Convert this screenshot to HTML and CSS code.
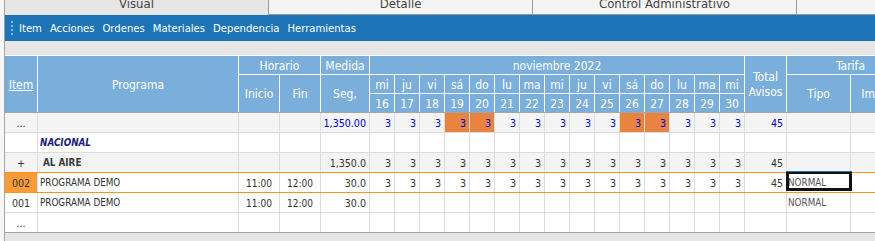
FILE: index.html
```html
<!DOCTYPE html>
<html lang="es">
<head>
<meta charset="utf-8">
<title>Programación</title>
<link rel="stylesheet" href="styles.css">
</head>
<body>
<div class="app">
  <div class="tabs">
    <div class="tab active">Visual</div>
    <div class="tab">Detalle</div>
    <div class="tab">Control Administrativo</div>
    <div class="tab rest"></div>
  </div>
  <div class="toolbar">
    <span class="grip"></span>
    <span class="menu">Item</span>
    <span class="menu">Acciones</span>
    <span class="menu">Ordenes</span>
    <span class="menu">Materiales</span>
    <span class="menu">Dependencia</span>
    <span class="menu">Herramientas</span>
  </div>
  <div class="spacer"></div>
  <div class="head">
    <div class="h c-item"><u>Item</u></div>
    <div class="h c-prog">Programa</div>
    <div class="h c-horario">Horario</div>
    <div class="h c-ini">Inicio</div>
    <div class="h c-fin">Fin</div>
    <div class="h c-medida">Medida</div>
    <div class="h c-seg">Seg,</div>
    <div class="h c-mes">noviembre 2022</div>
    <div class="h c-total">Total<br>Avisos</div>
    <div class="h c-tarifa">Tarifa</div>
    <div class="h c-tipo">Tipo</div>
    <div class="h c-imp">Importe</div>
    <div class="h dn">mi</div><div class="h dn">ju</div><div class="h dn">vi</div><div class="h dn">sá</div><div class="h dn">do</div><div class="h dn">lu</div><div class="h dn">ma</div><div class="h dn">mi</div><div class="h dn">ju</div><div class="h dn">vi</div><div class="h dn">sá</div><div class="h dn">do</div><div class="h dn">lu</div><div class="h dn">ma</div><div class="h dn">mi</div>
    <div class="h dd">16</div><div class="h dd">17</div><div class="h dd">18</div><div class="h dd">19</div><div class="h dd">20</div><div class="h dd">21</div><div class="h dd">22</div><div class="h dd">23</div><div class="h dd">24</div><div class="h dd">25</div><div class="h dd">26</div><div class="h dd">27</div><div class="h dd">28</div><div class="h dd">29</div><div class="h dd">30</div>
  </div>
  <div class="rows">
    <div class="row alt totals">
      <div class="cell center">...</div>
      <div class="cell"></div>
      <div class="cell"></div>
      <div class="cell"></div>
      <div class="cell num">1,350.00</div>
      <div class="cell num">3</div><div class="cell num">3</div><div class="cell num">3</div><div class="cell num we">3</div><div class="cell num we">3</div><div class="cell num">3</div><div class="cell num">3</div><div class="cell num">3</div><div class="cell num">3</div><div class="cell num">3</div><div class="cell num we">3</div><div class="cell num we">3</div><div class="cell num">3</div><div class="cell num">3</div><div class="cell num">3</div>
      <div class="cell num">45</div>
      <div class="cell"></div>
      <div class="cell"></div>
    </div>
    <div class="row">
      <div class="cell"></div>
      <div class="cell txt group">NACIONAL</div>
      <div class="cell"></div><div class="cell"></div><div class="cell"></div>
      <div class="cell"></div><div class="cell"></div><div class="cell"></div><div class="cell"></div><div class="cell"></div><div class="cell"></div><div class="cell"></div><div class="cell"></div><div class="cell"></div><div class="cell"></div><div class="cell"></div><div class="cell"></div><div class="cell"></div><div class="cell"></div><div class="cell"></div>
      <div class="cell"></div><div class="cell"></div><div class="cell"></div>
    </div>
    <div class="row alt">
      <div class="cell center">+</div>
      <div class="cell txt sub">AL AIRE</div>
      <div class="cell"></div><div class="cell"></div>
      <div class="cell num">1,350.0</div>
      <div class="cell num">3</div><div class="cell num">3</div><div class="cell num">3</div><div class="cell num">3</div><div class="cell num">3</div><div class="cell num">3</div><div class="cell num">3</div><div class="cell num">3</div><div class="cell num">3</div><div class="cell num">3</div><div class="cell num">3</div><div class="cell num">3</div><div class="cell num">3</div><div class="cell num">3</div><div class="cell num">3</div>
      <div class="cell num">45</div>
      <div class="cell"></div><div class="cell"></div>
    </div>
    <div class="row selected">
      <div class="cell center sel-item">002</div>
      <div class="cell txt">PROGRAMA DEMO</div>
      <div class="cell center time">11:00</div>
      <div class="cell center time">12:00</div>
      <div class="cell num">30.0</div>
      <div class="cell num">3</div><div class="cell num">3</div><div class="cell num">3</div><div class="cell num">3</div><div class="cell num">3</div><div class="cell num">3</div><div class="cell num">3</div><div class="cell num">3</div><div class="cell num">3</div><div class="cell num">3</div><div class="cell num">3</div><div class="cell num">3</div><div class="cell num">3</div><div class="cell num">3</div><div class="cell num">3</div>
      <div class="cell num">45</div>
      <div class="cell txt editing">NORMAL<span class="editor"></span></div>
      <div class="cell"></div>
    </div>
    <div class="row">
      <div class="cell center">001</div>
      <div class="cell txt">PROGRAMA DEMO</div>
      <div class="cell center time">11:00</div>
      <div class="cell center time">12:00</div>
      <div class="cell num">30.0</div>
      <div class="cell"></div><div class="cell"></div><div class="cell"></div><div class="cell"></div><div class="cell"></div><div class="cell"></div><div class="cell"></div><div class="cell"></div><div class="cell"></div><div class="cell"></div><div class="cell"></div><div class="cell"></div><div class="cell"></div><div class="cell"></div><div class="cell"></div>
      <div class="cell"></div>
      <div class="cell txt tipo">NORMAL</div>
      <div class="cell"></div>
    </div>
    <div class="row last">
      <div class="cell center">...</div>
      <div class="cell"></div>
      <div class="cell"></div><div class="cell"></div><div class="cell"></div>
      <div class="cell"></div><div class="cell"></div><div class="cell"></div><div class="cell"></div><div class="cell"></div><div class="cell"></div><div class="cell"></div><div class="cell"></div><div class="cell"></div><div class="cell"></div><div class="cell"></div><div class="cell"></div><div class="cell"></div><div class="cell"></div><div class="cell"></div>
      <div class="cell"></div><div class="cell"></div><div class="cell"></div>
    </div>
  </div>
  <div class="footer"></div>
</div>
</body>
</html>
```

FILE: styles.css
```css
* { box-sizing: border-box; }
html, body { margin: 0; padding: 0; }
body {
  background: #f7f7f7;
  font-family: "DejaVu Sans Condensed", "DejaVu Sans", sans-serif;
  width: 875px;
  height: 241px;
  overflow: hidden;
}
.app {
  margin-left: 4px;
  border-left: 1px solid #a3a3a3;
  width: 871px;
  height: 241px;
  overflow: hidden;
  display: flex;
  flex-direction: column;
}
/* tabs */
.tabs {
  display: flex;
  margin-top: -6px;
  height: 21px;
  flex: none;
}
.tab {
  width: 264px;
  flex: none;
  background: #f4f4f4;
  border-left: 1px solid #9a9a9a;
  border-bottom: 1px solid #9a9a9a;
  font-size: 13px;
  line-height: 20px;
  color: #444;
  text-align: center;
}
.tab.active {
  width: 263px;
  background: #e6e6e6;
  border-left: none;
  border-bottom: none;
}
.tab.rest { flex: 1; width: auto; }
/* toolbar */
.toolbar {
  flex: none;
  height: 26px;
  background: #1d74b7;
  display: flex;
  align-items: center;
  padding-left: 6px;
  gap: 8px;
  color: #fff;
  font-size: 11.2px;
}
.grip {
  width: 2px;
  height: 15px;
  margin-right: -2px;
  background: repeating-linear-gradient(to bottom, #8db8df 0 2px, transparent 2px 4px);
}
.menu { line-height: 14px; padding-top: 1px; }
.spacer {
  flex: none;
  height: 14px;
  background: #e6e6e6;
}
/* header */
.head {
  flex: none;
  display: grid;
  grid-template-columns: 32px 200px 40px 40px 48px repeat(15, 24px) 41px 63px 63px;
  grid-template-rows: 18px 18px 18px;
  gap: 1px;
  padding-top: 1px;
  background: #fff;
  border-bottom: 1px solid #a5a5a5;
}
.h {
  background: #7aaedb;
  color: #fff;
  font-size: 12px;
  display: flex;
  align-items: center;
  justify-content: center;
  text-align: center;
  line-height: 15px;
  padding-top: 2px;
  white-space: nowrap;
}
.c-item { grid-column: 1; grid-row: 1 / 4; }
.c-prog { grid-column: 2; grid-row: 1 / 4; }
.c-horario { grid-column: 3 / 5; grid-row: 1; }
.c-ini { grid-column: 3; grid-row: 2 / 4; }
.c-fin { grid-column: 4; grid-row: 2 / 4; }
.c-medida { grid-column: 5; grid-row: 1; }
.c-seg { grid-column: 5; grid-row: 2 / 4; }
.c-mes { grid-column: 6 / 21; grid-row: 1; }
.c-total { grid-column: 21; grid-row: 1 / 4; }
.c-tarifa { grid-column: 22 / 24; grid-row: 1; }
.c-tipo { grid-column: 22; grid-row: 2 / 4; }
.c-imp { grid-column: 23; grid-row: 2 / 4; }
.dn { grid-row: 2; }
.dd { grid-row: 3; }
/* body rows */
.rows { flex: none; }
.row {
  display: grid;
  grid-template-columns: 33px 201px 41px 41px 49px repeat(15, 25px) 42px 64px 64px;
  height: 20px;
  border-bottom: 1px solid #dcdcdc;
  background: #fff;
  font-size: 10.6px;
  color: #333;
}
.row.alt { background: #f4f4f4; }
.row.last { border-bottom-color: #a5a5a5; }
.row.selected {
  border-bottom-color: #f7931e;
  box-shadow: 0 -1px 0 #f7931e;
  position: relative;
}
.cell {
  border-right: 1px solid #dcdcdc;
  display: flex;
  align-items: center;
  padding: 0 2px;
  white-space: nowrap;
  overflow: visible;
}
.txt { font-size: 9.8px; }
.time { font-size: 10px; padding-top: 1px; }
.center { justify-content: center; }
.num { justify-content: flex-end; padding-right: 3px; }
.totals .num { color: #0000d8; }
.we { background: #e8843f; }
.group { color: #1b1b7a; font-weight: bold; font-style: italic; }
.sub { font-weight: bold; padding-left: 5px; color: #3a3a3a; }
.sel-item { background: #fb9b37; }
.tipo, .editing { padding-left: 1px; color: #555; }
.editing { position: relative; }
.editor {
  position: absolute;
  left: -1px;
  top: -1px;
  width: 66px;
  height: 19px;
  border: 3px solid #111;
  border-top-width: 2px;
  box-shadow: 0 -1px 0 #2a6db5;
}
.footer {
  flex: 1;
  background: #e6e6e6;
}
```
